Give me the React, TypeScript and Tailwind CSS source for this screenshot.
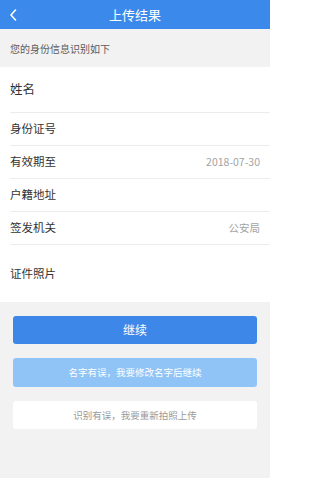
import React from "react";

const font = { fontFamily: '"Noto Sans CJK SC", "Noto Sans", sans-serif' };

function Row({ label, value, h, big }: { label: string; value?: string; h: string; big?: boolean }) {
  return (
    <div className={`flex items-center justify-between pr-[10px] ${h}`}>
      <span className={`${big ? "text-[12.5px]" : "text-[11.5px]"} text-[#333]`}>{label}</span>
      {value && <span className="text-[10.5px] text-[#a3a3a3]">{value}</span>}
    </div>
  );
}

export default function App() {
  return (
    <div className="w-[270px] h-[478px] bg-[#f2f2f2] flex flex-col" style={font}>
      <div className="h-[29px] bg-[#3b8aeb] flex items-center relative">
        <svg className="absolute left-[9px] top-[9px]" width="9" height="12" viewBox="0 0 9 12">
          <path d="M6.5 1 L2 6 L6.5 11" stroke="#fff" strokeWidth="1.6" fill="none" strokeLinecap="round" strokeLinejoin="round" />
        </svg>
        <div className="flex-1 text-center text-white text-[13px]">上传结果</div>
      </div>
      <div className="h-[38px] flex items-center px-[10px] text-[10px] text-[#5c5c5c]">您的身份信息识别如下</div>
      <div className="bg-white pl-[10px] flex flex-col">
        <div className="border-b border-[#ececec]"><Row label="姓名" h="h-[45px]" big /></div>
        <div className="border-b border-[#ececec]"><Row label="身份证号" h="h-[32px]" /></div>
        <div className="border-b border-[#ececec]"><Row label="有效期至" value="2018-07-30" h="h-[32px]" /></div>
        <div className="border-b border-[#ececec]"><Row label="户籍地址" h="h-[32px]" /></div>
        <div className="border-b border-[#ececec]"><Row label="签发机关" value="公安局" h="h-[32px]" /></div>
        <Row label="证件照片" h="h-[57px]" />
      </div>
      <div className="flex flex-col gap-[14px] px-[13px] pt-[14px]">
        <div className="h-[28px] rounded-[3px] bg-[#3c87e8] flex items-center justify-center text-white text-[12px]">继续</div>
        <div className="h-[29px] rounded-[3px] bg-[#90c3f6] flex items-center justify-center text-white text-[9.5px]">名字有误，我要修改名字后继续</div>
        <div className="h-[28px] rounded-[3px] bg-white flex items-center justify-center text-[#999] text-[9.5px]">识别有误，我要重新拍照上传</div>
      </div>
    </div>
  );
}
